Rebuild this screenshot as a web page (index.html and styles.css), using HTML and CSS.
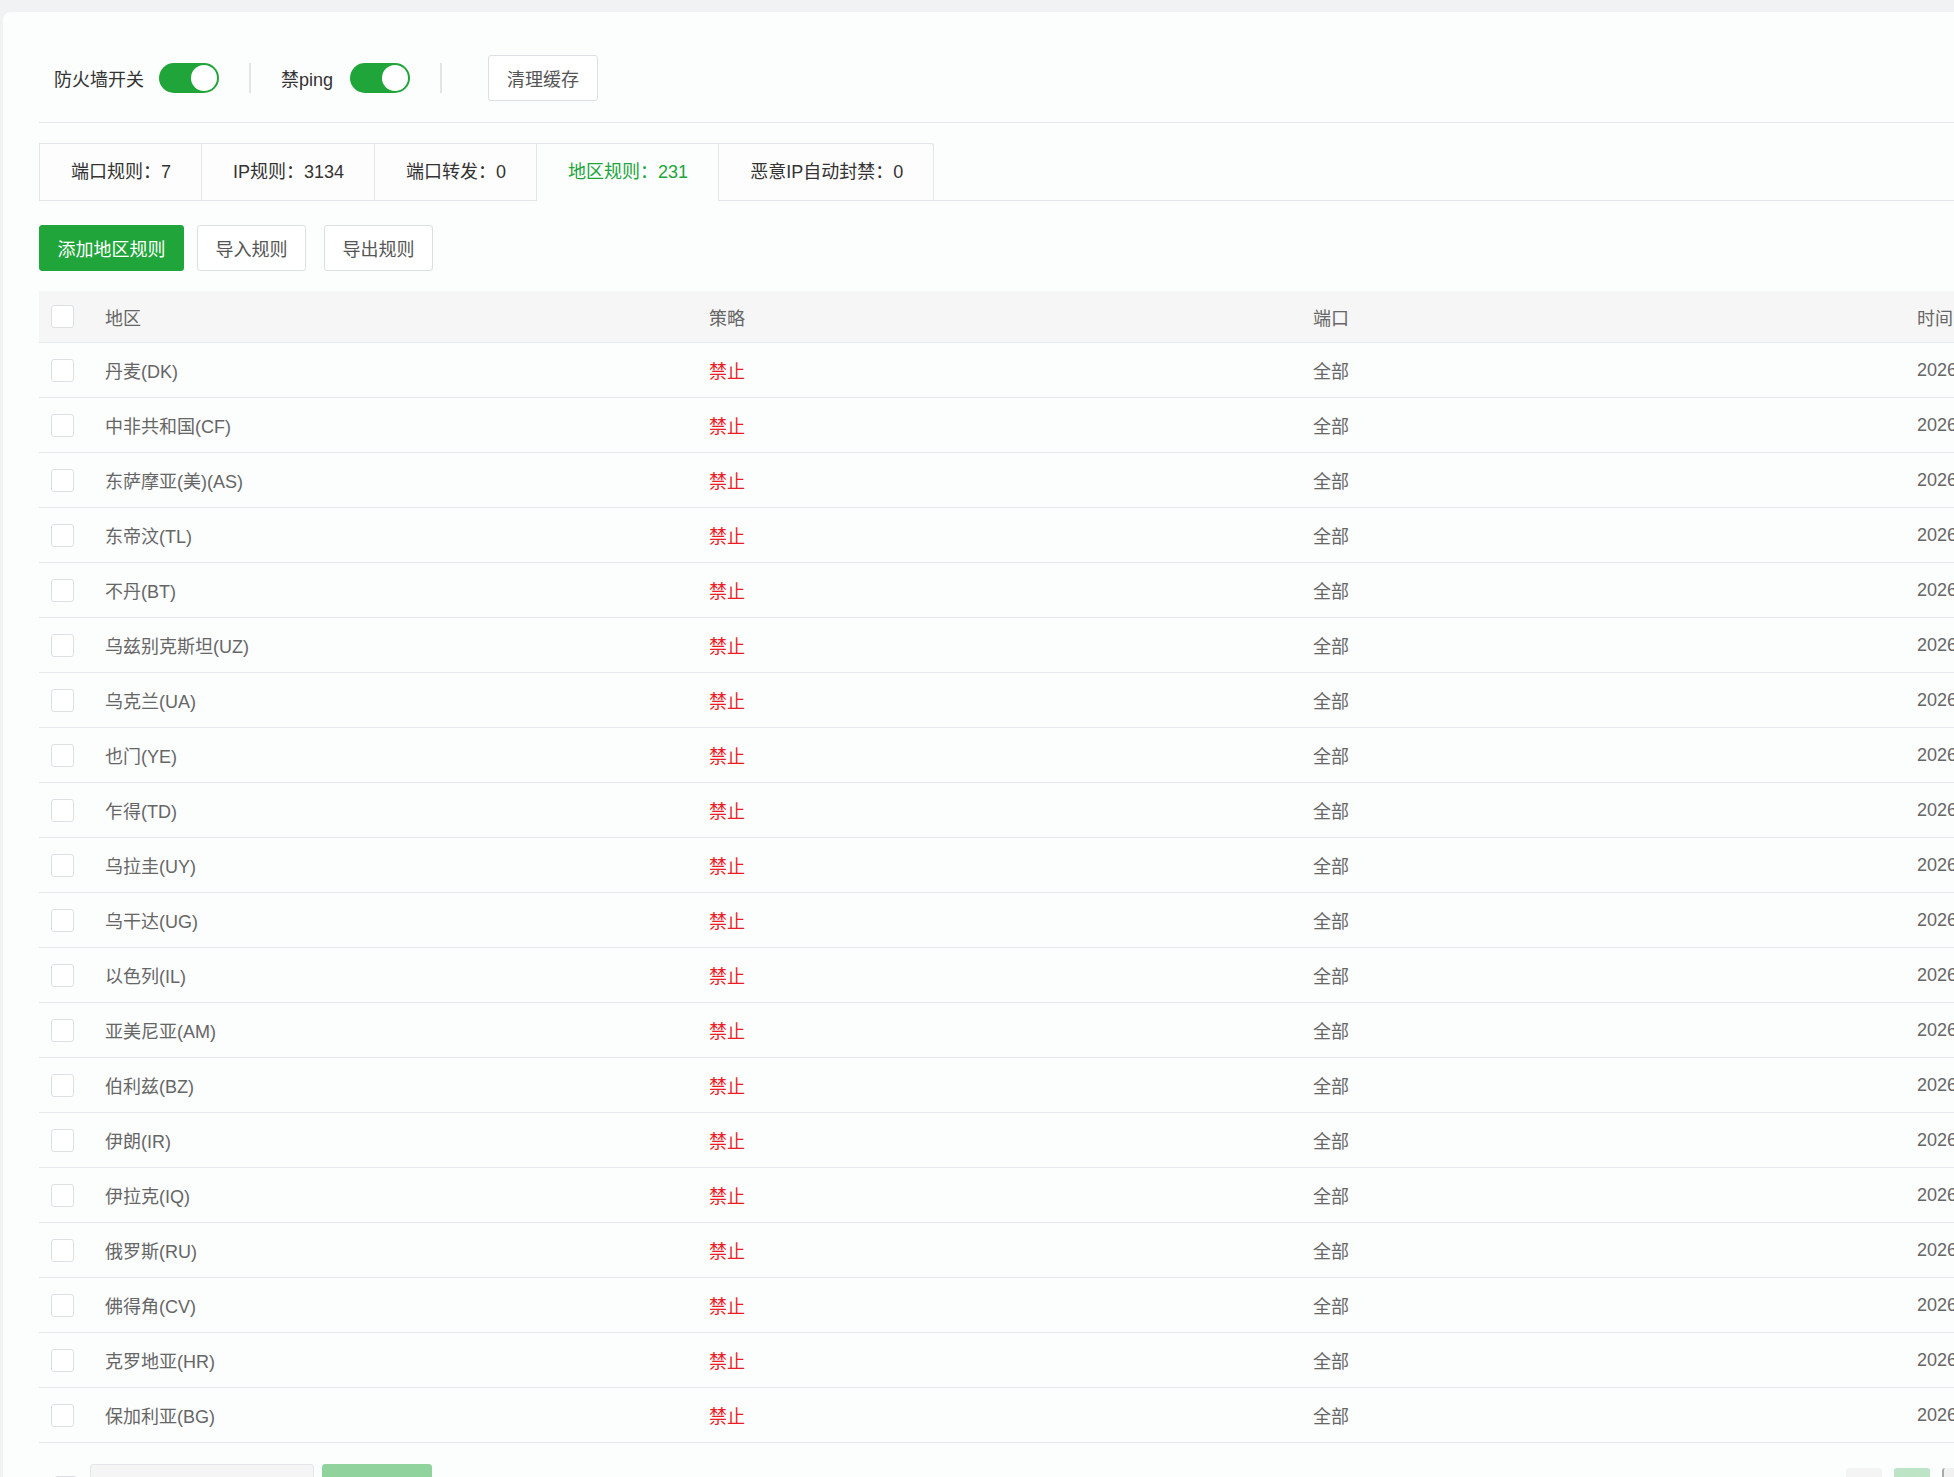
FILE: index.html
```html
<!DOCTYPE html>
<html lang="zh-CN">
<head>
  <meta charset="UTF-8" />
  <meta name="viewport" content="width=device-width, initial-scale=1.0"/>
  <title>系统防火墙 - 地区规则</title>
  <link rel="stylesheet" href="styles.css">
</head>
<body>

  <div class="card">

    <!-- Top switches -->
    <div class="toolbar">
      <div class="switch-group">
        <span>防火墙开关</span>
        <span class="switch on"></span>
      </div>
      <span class="divider"></span>
      <div class="switch-group">
        <span>禁ping</span>
        <span class="switch on"></span>
      </div>
      <span class="divider"></span>
      <button class="btn btn-default btn-cache">清理缓存</button>
    </div>

    <!-- Rule tabs -->
    <div class="tabs">
      <div class="tab">端口规则：7</div>
      <div class="tab">IP规则：3134</div>
      <div class="tab">端口转发：0</div>
      <div class="tab active">地区规则：231</div>
      <div class="tab">恶意IP自动封禁：0</div>
    </div>

    <div class="actions">
      <button class="btn btn-success">添加地区规则</button>
      <button class="btn btn-default">导入规则</button>
      <button class="btn btn-default">导出规则</button>
    </div>

    <div class="table-wrap">
      <div class="table">
        <div class="row head">
          <div class="cell"><span class="checkbox"></span></div>
          <div class="cell">地区</div>
          <div class="cell">策略</div>
          <div class="cell">端口</div>
          <div class="cell">时间</div>
        </div>
        <div id="ruleRows"></div>
      </div>
    </div>

    <!-- Batch + pagination -->
    <div class="footer">
      <div class="batch">
        <span class="checkbox"></span>
        <div class="batch-select">请选择批量操作</div>
        <button class="btn batch-btn">批量操作</button>
      </div>
      <div class="pager">
        <span class="page">&lt;</span>
        <span class="page current">1</span>
        <span class="page dark">2</span>
      </div>
    </div>

  </div>

  <script>
    const regions = [
      '丹麦(DK)', '中非共和国(CF)', '东萨摩亚(美)(AS)', '东帝汶(TL)', '不丹(BT)',
      '乌兹别克斯坦(UZ)', '乌克兰(UA)', '也门(YE)', '乍得(TD)', '乌拉圭(UY)',
      '乌干达(UG)', '以色列(IL)', '亚美尼亚(AM)', '伯利兹(BZ)', '伊朗(IR)',
      '伊拉克(IQ)', '俄罗斯(RU)', '佛得角(CV)', '克罗地亚(HR)', '保加利亚(BG)'
    ];

    function renderRows() {
      const box = document.getElementById('ruleRows');
      box.innerHTML = regions.map(name => `
        <div class="row">
          <div class="cell"><span class="checkbox"></span></div>
          <div class="cell">${name}</div>
          <div class="cell deny">禁止</div>
          <div class="cell">全部</div>
          <div class="cell">2026-01-08 15:32:10</div>
        </div>
      `).join('');
    }

    renderRows();
  </script>
</body>
</html>
```

FILE: styles.css
```css
html, body {
  margin: 0;
  height: 100%;
  overflow: hidden;
}

body {
  font-family: "Liberation Sans", "Noto Sans CJK SC", sans-serif;
  font-size: 18px;
  color: #333;
  background-color: #f1f2f3;
  padding: 12px 0 0 3px;
  box-sizing: border-box;
}

.card {
  width: 2011px;
  background-color: #fcfdfd;
  border-radius: 8px 8px 0 0;
  padding: 0 0 0 36px;
  box-sizing: border-box;
  min-height: 1600px;
}

/* switches bar */
.toolbar {
  display: flex;
  align-items: center;
  height: 46px;
  padding: 43px 0 21px 15px;
  border-bottom: 1px solid #e6e7ec;
}

.switch-group {
  display: flex;
  align-items: center;
  gap: 15px;
}
.switch-group + .divider + .switch-group {
  gap: 17px;
}

.switch {
  position: relative;
  width: 60px;
  height: 30px;
  border-radius: 15px;
  background-color: #20a53a;
}
.switch::after {
  content: "";
  position: absolute;
  top: 2px;
  right: 2px;
  width: 26px;
  height: 26px;
  border-radius: 50%;
  background-color: #fff;
}

.divider {
  width: 2px;
  height: 30px;
  background-color: #e3e4e6;
  margin: 0 30px;
}

.btn {
  height: 46px;
  padding: 0;
  font-family: inherit;
  font-size: 18px;
  text-align: center;
  white-space: nowrap;
  border-radius: 3px;
  cursor: pointer;
  box-sizing: border-box;
}

.btn-default {
  background-color: #fff;
  color: #555;
  border: 1px solid #dcdfe6;
}

.btn-success {
  background-color: #20a53a;
  color: #fff;
  border: 1px solid #20a53a;
}

.btn-cache {
  width: 110px;
  margin-left: 16px;
}

/* tabs */
.tabs {
  display: flex;
  margin-top: 20px;
  border-bottom: 1px solid #e3e5ea;
}

.tab {
  height: 56px;
  line-height: 56px;
  padding: 0 30px 0 31px;
  color: #333;
  border-top: 1px solid #e3e5ea;
  border-left: 1px solid #e3e5ea;
  background-color: #fdfdfd;
}
.tab:last-child {
  border-right: 1px solid #e3e5ea;
  border-top-right-radius: 3px;
}
.tab.active {
  color: #20a53a;
  background-color: #fcfdfd;
  margin-bottom: -1px;
  padding-bottom: 1px;
}

.actions {
  display: flex;
  margin-top: 24px;
}
.actions .btn-success {
  width: 145px;
  margin-right: 13px;
}
.actions .btn-default {
  width: 109px;
  margin-right: 18px;
}

/* table */
.table-wrap {
  margin-top: 20px;
}

.row {
  display: grid;
  grid-template-columns: 54px 604px 604px 604px 604px;
  align-items: center;
  height: 55px;
  box-sizing: border-box;
  border-bottom: 1px solid #e8e9ef;
  color: #666;
  white-space: nowrap;
}
.row.head {
  height: 52px;
  background-color: #f6f6f6;
}

.cell {
  padding-left: 12px;
}

.deny {
  color: #ec1c24;
}

.checkbox {
  display: block;
  width: 23px;
  height: 23px;
  box-sizing: border-box;
  border: 1px solid #dcdfe6;
  border-radius: 3px;
  background-color: #fff;
}

/* footer */
.footer {
  display: flex;
  justify-content: space-between;
  margin-top: 21px;
  width: 1941px;
}

.batch {
  display: flex;
  align-items: center;
  padding-left: 15px;
}
.batch .checkbox {
  margin-right: 13px;
}

.batch-select {
  width: 224px;
  height: 46px;
  line-height: 46px;
  padding-left: 12px;
  box-sizing: border-box;
  background-color: #f5f5f5;
  border: 1px solid #e4e6eb;
  border-radius: 3px;
  color: #999;
}

.batch-btn {
  width: 110px;
  margin-left: 8px;
  background-color: #91d39c;
  border: 1px solid #91d39c;
  color: #fff;
}

.pager {
  display: flex;
  gap: 12px;
  padding-top: 4px;
}

.page {
  width: 36px;
  height: 36px;
  line-height: 36px;
  text-align: center;
  border-radius: 3px;
  background-color: #f4f4f4;
  color: #f4f4f4;
}
.page.current {
  background-color: #bde4c5;
  color: #bde4c5;
}
.page.dark {
  background-color: #f1f1f1;
  border-left: 2px solid #aaa;
  color: #f1f1f1;
}
```
